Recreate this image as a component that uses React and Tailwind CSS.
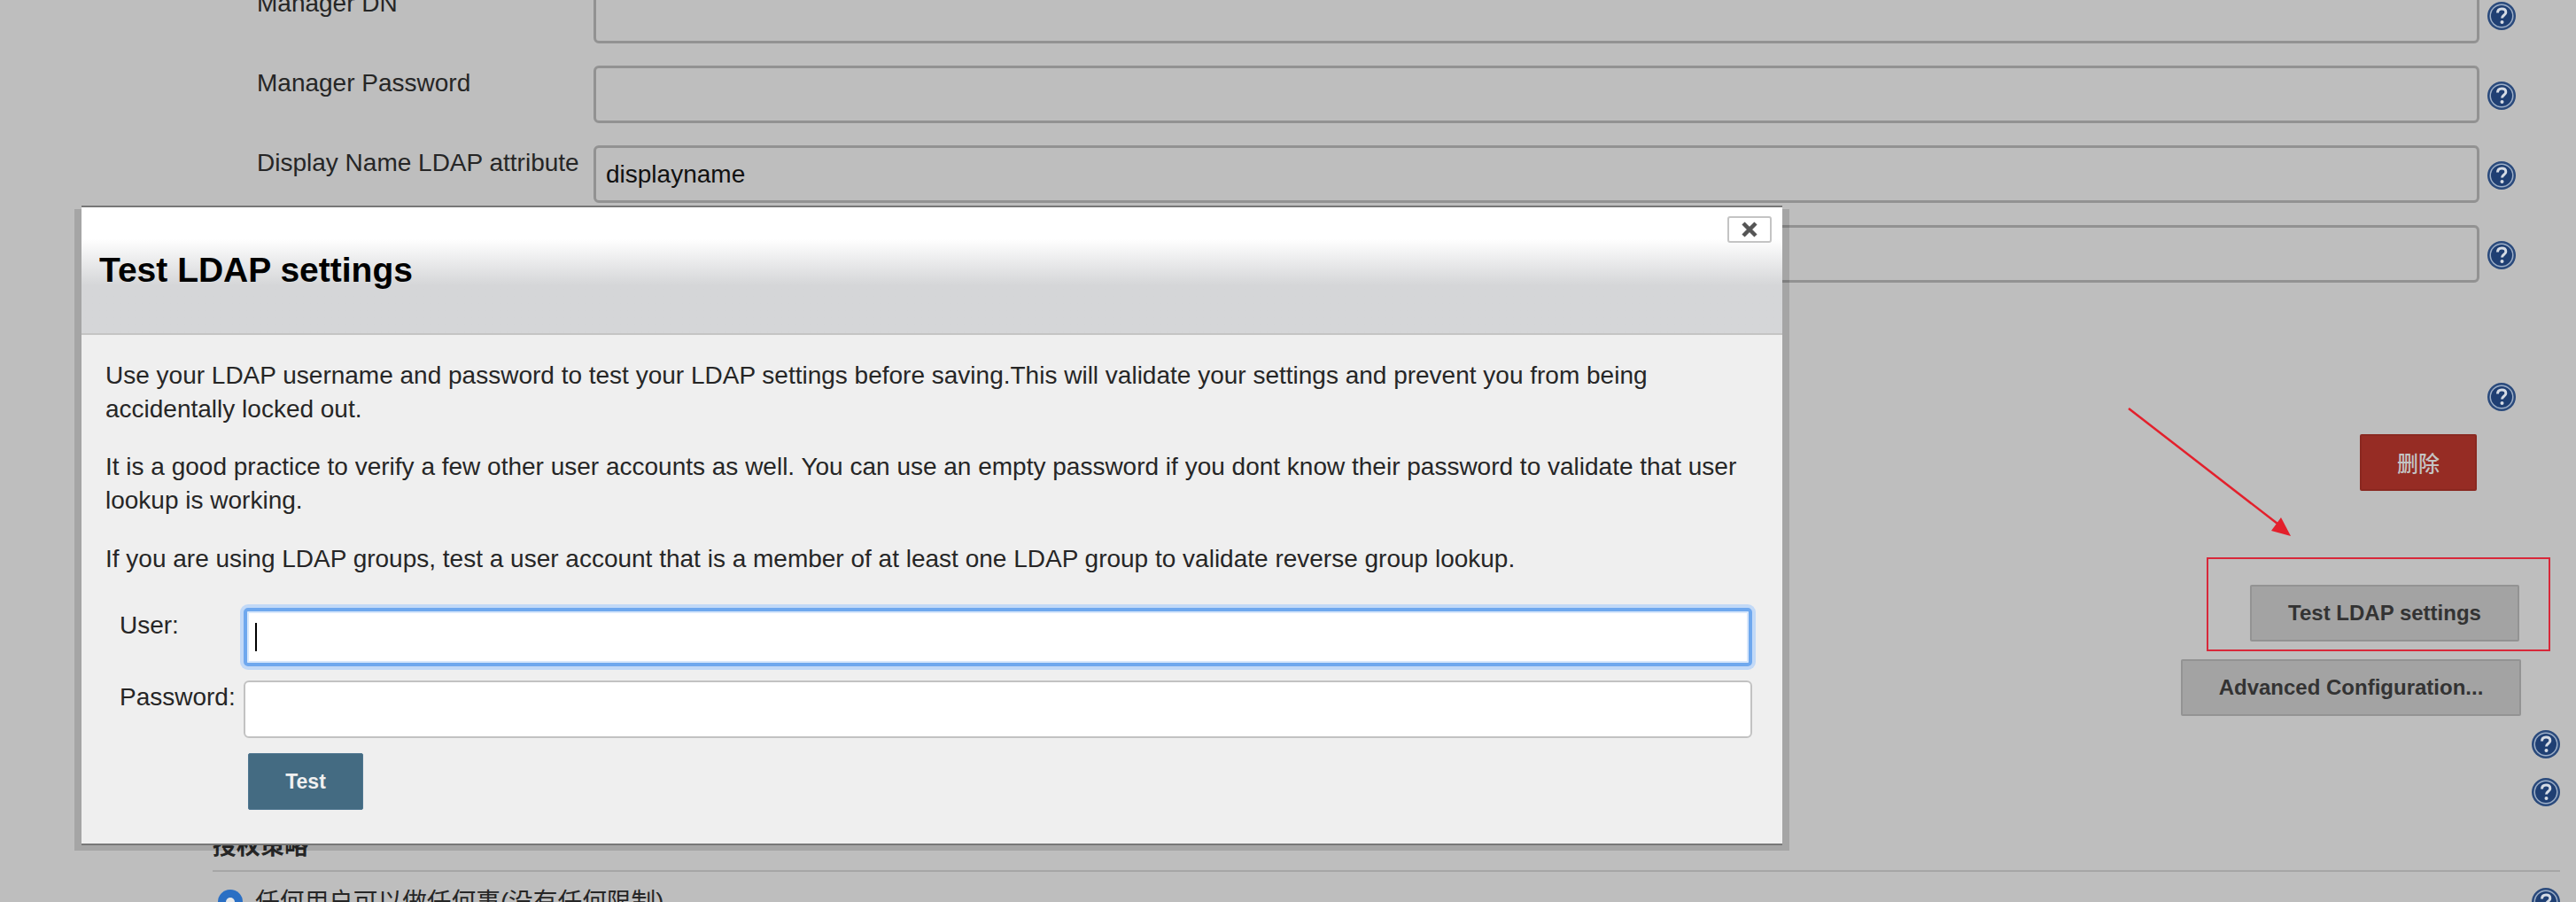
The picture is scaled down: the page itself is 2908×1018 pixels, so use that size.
import React from "react";

const HelpIcon = () => (
  <svg width="32" height="32" viewBox="0 0 32 32" className="block shrink-0">
    <circle cx="16" cy="16" r="16" fill="#2a4a7c" />
    <circle cx="16" cy="16" r="13.5" fill="#9fb0c8" />
    <circle cx="16" cy="16" r="12" fill="#1f3f73" />
    <path d="M11.5 12.5c0-3 2-4.5 4.7-4.5 2.8 0 4.6 1.6 4.6 3.9 0 3.3-4.3 3.4-4.3 6.6" fill="none" stroke="#d5dbe4" strokeWidth="3" />
    <circle cx="16.5" cy="23" r="2" fill="#d5dbe4" />
  </svg>
);

const Row = ({ label, value }) => (
  <div className="flex h-[65px] mb-[25px]">
    <label className="w-[670px] pl-[290px] shrink-0 text-[28px] leading-[38px] mt-[1px] text-[#262626] whitespace-nowrap">
      {label}
    </label>
    <div className="flex-1 border-[3px] border-[#929292] rounded-[6px] px-[11px] flex items-center text-[28px] text-[#111111]">
      {value}
    </div>
    <div className="w-[41px] flex justify-end pt-[18px] shrink-0">
      <HelpIcon />
    </div>
  </div>
);

const GreyButton = ({ className, children }) => (
  <div className={`h-[64px] bg-[#a3a3a3] border-2 border-[#939393] rounded-[2px] flex items-center justify-center text-[24px] font-bold text-[#333333] ${className}`}>
    {children}
  </div>
);

export default function App() {
  return (
    <div className="relative w-[2908px] h-[1018px] overflow-hidden bg-[#bebebe] font-['Liberation_Sans',Arial,sans-serif]">
      {/* page behind the dialog */}
      <div className="-mt-[16px] pr-[68px]">
        <Row label="Manager DN" />
        <Row label="Manager Password" />
        <Row label="Display Name LDAP attribute" value="displayname" />
        <Row label="" />

        <div className="flex flex-col items-end mt-[113px]">
          <HelpIcon />
          <div className="w-[132px] h-[64px] mt-[26px] mr-[44px] bg-[#962c24] border-2 border-[#8a2820] rounded-[2px] flex items-center justify-center text-[24px] font-medium text-[#c4c4c4] font-['Noto_Sans_CJK_SC',sans-serif]">
            删除
          </div>
          <GreyButton className="w-[304px] mt-[106px] -mr-[4px]">Test LDAP settings</GreyButton>
          <GreyButton className="w-[384px] mt-[20px] -mr-[6px]">Advanced Configuration...</GreyButton>
          <div className="-mr-[50px] mt-[16px]">
            <HelpIcon />
          </div>
          <div className="-mr-[50px] mt-[22px]">
            <HelpIcon />
          </div>
        </div>

        <div className="ml-[240px] -mr-[50px] mt-[26px] font-['Liberation_Sans','Noto_Sans_CJK_SC',sans-serif]">
          <div className="text-[27px] leading-[38px] font-bold text-[#262626] border-b-2 border-[#a6a6a6] pb-[8px]">授权策略</div>
          <div className="flex items-center mt-[18px] text-[27.7px] leading-[32px] text-[#262626]">
            <span className="w-[28px] h-[28px] ml-[6px] mr-[14px] rounded-full bg-[#2a6fc4] flex items-center justify-center">
              <span className="w-[10px] h-[10px] rounded-full bg-[#e8e8e8]" />
            </span>
            <span className="flex-1">任何用户可以做任何事(没有任何限制)</span>
            <HelpIcon />
          </div>
        </div>
      </div>

      {/* red annotation */}
      <div className="absolute left-[2491px] top-[629px] w-[388px] h-[106px] border-2 border-[#d8283a]" />
      <svg className="absolute left-[2395px] top-[455px]" width="200" height="160" viewBox="0 0 200 160">
        <path d="M8 6 L176 136" stroke="#e3202c" strokeWidth="2.5" fill="none" />
        <path d="M191 150 L169 144 L180 129 Z" fill="#e3202c" />
      </svg>

      {/* dialog */}
      <div className="absolute left-[84px] top-[236px] w-[1936px] h-[724px] bg-[rgba(0,0,0,0.13)] px-[8px]">
        <div className="relative -mt-[4px] h-[722px] bg-[#efefef] border-y-2 border-[#777777] text-[#262626]">
          <div className="h-[144px] bg-gradient-to-b from-white from-[25%] to-[#d5d6d8] to-[62%] border-b-2 border-[#c4c4c4] pl-[20px] pt-[49px]">
            <h1 className="text-[39px] leading-[44px] font-bold text-black">Test LDAP settings</h1>
          </div>
          <button className="absolute right-[12px] top-[10px] w-[50px] h-[30px] bg-white border-2 border-[#c4c4c4] rounded-[3px] flex items-center justify-center">
            <svg width="20" height="18" viewBox="0 0 20 18">
              <path d="M3 2 L17 16 M17 2 L3 16" stroke="#555555" strokeWidth="4.5" />
            </svg>
          </button>

          <div className="pl-[27px] pr-[26px] pt-[27px] text-[28px] leading-[38px]">
            <p className="mb-[27px]">Use your LDAP username and password to test your LDAP settings before saving.This will validate your settings and prevent you from being accidentally locked out.</p>
            <p className="mb-[28px]">It is a good practice to verify a few other user accounts as well. You can use an empty password if you dont know their password to validate that user lookup is working.</p>
            <p>If you are using LDAP groups, test a user account that is a member of at least one LDAP group to validate reverse group lookup.</p>
          </div>

          <div className="grid grid-cols-[140px_1fr] ml-[43px] mr-[34px] mt-[36px] text-[28px] leading-[38px]">
            <label className="pt-[1px]">User:</label>
            <div className="h-[66px] border-4 border-[#6fa8ee] rounded-[5px] bg-white shadow-[0_0_0_4px_#c2d9f7,inset_0_0_0_2px_#d9e8fb] flex items-center pl-[9px]">
              <span className="w-[2px] h-[32px] bg-black" />
            </div>
            <label className="mt-[16px]">Password:</label>
            <div className="h-[65px] mt-[16px] border-2 border-[#c2c2c2] rounded-[6px] bg-white" />
            <div />
            <button className="w-[130px] h-[64px] mt-[17px] ml-[5px] bg-[#446b82] border border-[#4f7690] rounded-[2px] text-[23px] font-bold text-[#f0f0f0]">Test</button>
          </div>
        </div>
      </div>
    </div>
  );
}
